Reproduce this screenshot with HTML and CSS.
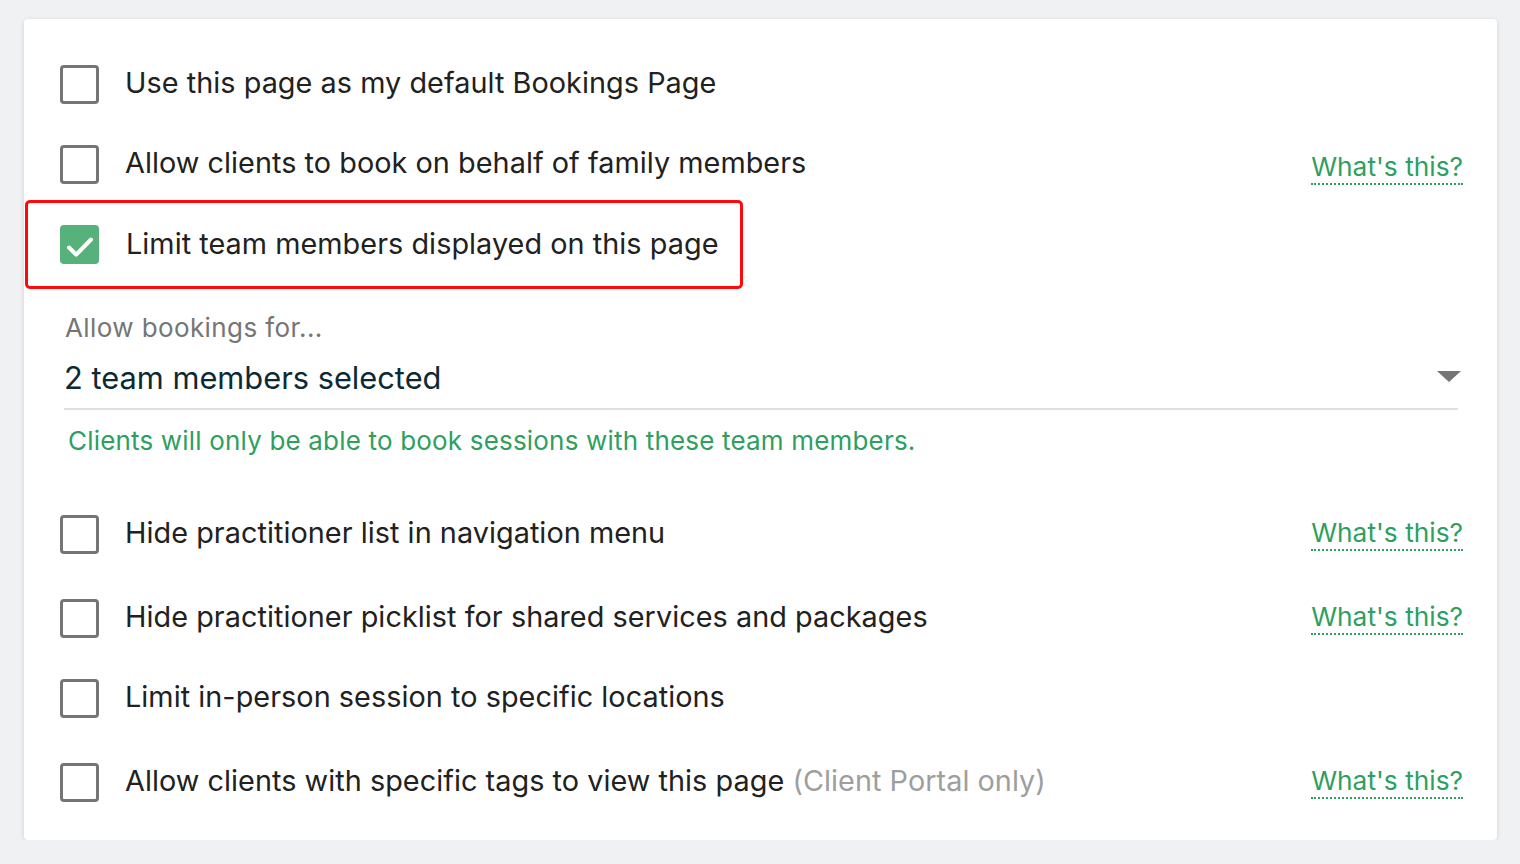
FILE: index.html
```html
<!DOCTYPE html>
<html lang="en">
<head>
<meta charset="utf-8">
<title>Bookings Page settings</title>
<link rel="stylesheet" href="styles.css">
</head>
<body>
<main class="card">
  <div class="row">
    <span class="checkbox"></span>
    <span class="label">Use this page as my default Bookings Page</span>
  </div>

  <div class="row row--link-low">
    <span class="checkbox"></span>
    <span class="label">Allow clients to book on behalf of family members</span>
    <a class="help-link" href="#">What's this?</a>
  </div>

  <div class="row row--highlight">
    <span class="checkbox checkbox--checked">
      <svg viewBox="0 0 39 39" width="39" height="39" aria-hidden="true"><path d="M9 22.5l7.2 7.2L31 14.5" fill="none" stroke="#fff" stroke-width="4" stroke-linecap="round" stroke-linejoin="round"/></svg>
    </span>
    <span class="label">Limit team members displayed on this page</span>
  </div>

  <section class="select-block">
    <div class="select-label">Allow bookings for...</div>
    <div class="select-field">
      <span class="select-value">2 team members selected</span>
      <span class="select-arrow"></span>
    </div>
    <div class="select-hint">Clients will only be able to book sessions with these team members.</div>
  </section>

  <div class="row row--after-select">
    <span class="checkbox"></span>
    <span class="label">Hide practitioner list in navigation menu</span>
    <a class="help-link" href="#">What's this?</a>
  </div>

  <div class="row row--spaced">
    <span class="checkbox"></span>
    <span class="label">Hide practitioner picklist for shared services and packages</span>
    <a class="help-link" href="#">What's this?</a>
  </div>

  <div class="row">
    <span class="checkbox"></span>
    <span class="label">Limit in-person session to specific locations</span>
  </div>

  <div class="row row--spaced">
    <span class="checkbox"></span>
    <span class="label">Allow clients with specific tags to view this page <span class="muted">(Client Portal only)</span></span>
    <a class="help-link" href="#">What's this?</a>
  </div>
</main>
</body>
</html>
```

FILE: styles.css
```css
html, body {
  margin: 0;
  padding: 0;
  background: #f0f1f3;
}

body {
  font-family: Inter, "Noto Sans", "Liberation Sans", sans-serif;
  color: #212121;
  -webkit-font-smoothing: antialiased;
}

.card {
  margin: 19px 23px 0 24px;
  padding: 25px 34px 17px 36px;
  background: #fff;
  border-radius: 4px;
  box-shadow: 0 1px 5px rgba(0, 0, 0, 0.13);
  box-sizing: border-box;
  height: 821px;
}

.row {
  display: flex;
  align-items: center;
  height: 80px;
}

.checkbox {
  flex: none;
  width: 39px;
  height: 39px;
  box-sizing: border-box;
  border: 3px solid #757575;
  border-radius: 4px;
  display: flex;
  align-items: center;
  justify-content: center;
}

.checkbox--checked {
  background: #57b17b;
  border: 0;
}

.label {
  margin-left: 26px;
  padding-bottom: 2px;
  font-size: 28.8px;
  line-height: 36px;
  letter-spacing: 0.05px;
  color: #212121;
  flex: 1;
}

.muted {
  color: #9e9e9e;
}

.help-link {
  flex: none;
  font-size: 26.3px;
  line-height: 30px;
  color: #2e9f5e;
  text-decoration: none;
  border-bottom: 2px dotted #2e9f5e;
  padding-bottom: 1px;
}

.row--link-low .help-link {
  margin-top: 9px;
}

.row--highlight {
  margin-top: -4px;
  margin-left: -35px;
  width: fit-content;
  height: 89px;
  box-sizing: border-box;
  padding: 0 22px 0 32px;
  border: 3px solid #ff0a0a;
  border-radius: 5px;
}

.row--highlight .label {
  flex: none;
  margin-left: 27px;
}

.select-block {
  margin: 24px 5px 0 4px;
}

.select-label {
  font-size: 26px;
  line-height: 30px;
  letter-spacing: 0.4px;
  color: #757575;
  padding-left: 1px;
}

.select-field {
  margin-top: 17px;
  display: flex;
  align-items: center;
  padding-bottom: 12px;
  border-bottom: 2px solid #e0e0e0;
}

.select-value {
  flex: 1;
  font-size: 30.8px;
  line-height: 36px;
  color: #0c2a33;
}

.select-arrow {
  width: 0;
  height: 0;
  border-left: 12.5px solid transparent;
  border-right: 12.5px solid transparent;
  border-top: 11px solid #757575;
  margin-right: -3px;
  margin-top: -4px;
}

.select-hint {
  margin-top: 16px;
  padding-left: 4px;
  font-size: 26px;
  line-height: 30px;
  letter-spacing: 0.18px;
  color: #2e9f5e;
}

.row--after-select {
  margin-top: 38px;
}

.row--spaced {
  margin-top: 4px;
}
```
